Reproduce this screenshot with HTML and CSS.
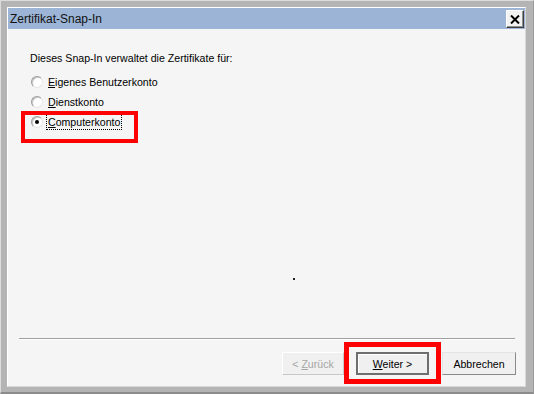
FILE: index.html
```html
<!DOCTYPE html>
<html lang="de">
<head>
    <meta charset="UTF-8">
    <title>Zertifikat-Snap-In</title>
    <link rel="stylesheet" href="styles.css">
</head>
<body>
    <div class="window">
        <div class="client">
            <div class="titlebar">
                <span class="title">Zertifikat-Snap-In</span>
                <button class="close" aria-label="Schließen">
                    <svg width="10" height="9" viewBox="0 0 10 9">
                        <path d="M1 0.5 L9 8.5 M9 0.5 L1 8.5" stroke="#000" stroke-width="2"/>
                    </svg>
                </button>
            </div>
            <div class="body">
                <div class="content">
                    <p class="intro">Dieses Snap-In verwaltet die Zertifikate für:</p>
                    <label class="radio"><span class="circle"></span><span class="text"><u>E</u>igenes Benutzerkonto</span></label>
                    <label class="radio"><span class="circle"></span><span class="text"><u>D</u>ienstkonto</span></label>
                    <label class="radio"><span class="circle checked"></span><span class="text focus"><u>C</u>omputerkonto</span></label>
                </div>
                <div class="footer">
                    <div class="separator"></div>
                    <div class="buttons">
                        <button class="btn btn-back" disabled>&lt; <u>Z</u>urück</button>
                        <button class="btn btn-next"><u>W</u>eiter &gt;</button>
                        <button class="btn btn-cancel">Abbrechen</button>
                    </div>
                </div>
            </div>
        </div>
        <div class="mark mark-radio"></div>
        <div class="mark mark-next"></div>
        <div class="speck"></div>
    </div>
</body>
</html>
```

FILE: styles.css
```css
body {
    margin: 0;
    font-family: "Liberation Sans", Arial, sans-serif;
    font-size: 10.6px;
    color: #000;
}
.window {
    position: relative;
    width: 534px;
    height: 394px;
    box-sizing: border-box;
    background: #b4b4b4;
    border-top: 1px solid #dcdcdc;
    border-left: 1px solid #dcdcdc;
    border-right: 1px solid #9a9a9a;
    border-bottom: 2px solid #8c8c8c;
    padding: 6px 7px 5px 6px;
}
.client {
    height: 100%;
    box-sizing: border-box;
    border: 1px solid #fff;
    border-right-color: #d8d8d8;
    border-bottom-color: #d8d8d8;
    display: flex;
    flex-direction: column;
    background: #f5f5f5;
}
.titlebar {
    height: 21px;
    background: #9cb5d6;
    display: flex;
    align-items: center;
    justify-content: space-between;
    padding: 0 1px 0 2px;
}
.title {
    font-size: 12px;
    color: #111;
}
.close {
    width: 18px;
    height: 18px;
    padding: 0;
    margin-top: 1px;
    background: #f2f2f2;
    border: 1px solid;
    border-color: #fff #404040 #404040 #fff;
    box-shadow: inset -1px -1px 0 #909090;
    display: flex;
    align-items: center;
    justify-content: center;
}
.body {
    flex: 1;
    display: flex;
    flex-direction: column;
}
.content {
    flex: 1;
    padding: 23px 0 0 22px;
}
.intro {
    margin: 0 0 7px;
    line-height: 13px;
}
.radio {
    display: flex;
    align-items: center;
    height: 20px;
}
.circle {
    width: 10px;
    height: 10px;
    margin: 0 5px 0 1px;
    border-radius: 50%;
    border: 1px solid;
    border-color: #9a9a9a #e6e6e6 #e6e6e6 #9a9a9a;
    background: #fff;
    box-shadow: inset 1px 1px 0 #c8c8c8;
    display: flex;
    align-items: center;
    justify-content: center;
}
.circle.checked::after {
    content: "";
    width: 4px;
    height: 4px;
    border-radius: 50%;
    background: #000;
}
.text {
    line-height: 14px;
    padding: 0 1px;
    border: 1px solid transparent;
    margin-left: -2px;
}
.text.focus {
    border: 1px dotted #000;
}
.footer {
    padding: 0 0 11px 0;
}
.separator {
    margin: 0 10px 0 11px;
    height: 1px;
    background: #a0a0a0;
    border-bottom: 1px solid #fff;
}
.buttons {
    display: flex;
    justify-content: flex-end;
    padding: 12px 9px 0 0;
}
.btn {
    height: 23px;
    box-sizing: border-box;
    font-family: inherit;
    font-size: 10.6px;
    color: #000;
    background: #f0f0f0;
    border: 1px solid;
    border-color: #e4e4e4 #8a8a8a #8a8a8a #e4e4e4;
    padding: 0;
}
.btn-back {
    width: 62px;
    color: #a6a6a6;
    border-color: #fff #c8c8c8 #c8c8c8 #fff;
}
.btn-next {
    width: 73px;
    margin-left: 12px;
    border: 2px solid #6e6e6e;
    box-shadow: inset 1px 1px 0 #fff;
}
.btn-cancel {
    width: 74px;
    margin-left: 13px;
}
.mark {
    position: absolute;
    box-sizing: border-box;
    border: 4px solid #f00;
}
.mark-radio {
    left: 20px;
    top: 110px;
    width: 117px;
    height: 32px;
}
.mark-next {
    left: 343px;
    top: 341px;
    width: 97px;
    height: 42px;
    border-width: 5px;
}
.speck {
    position: absolute;
    left: 292px;
    top: 277px;
    width: 2px;
    height: 2px;
    background: #222;
}
```
